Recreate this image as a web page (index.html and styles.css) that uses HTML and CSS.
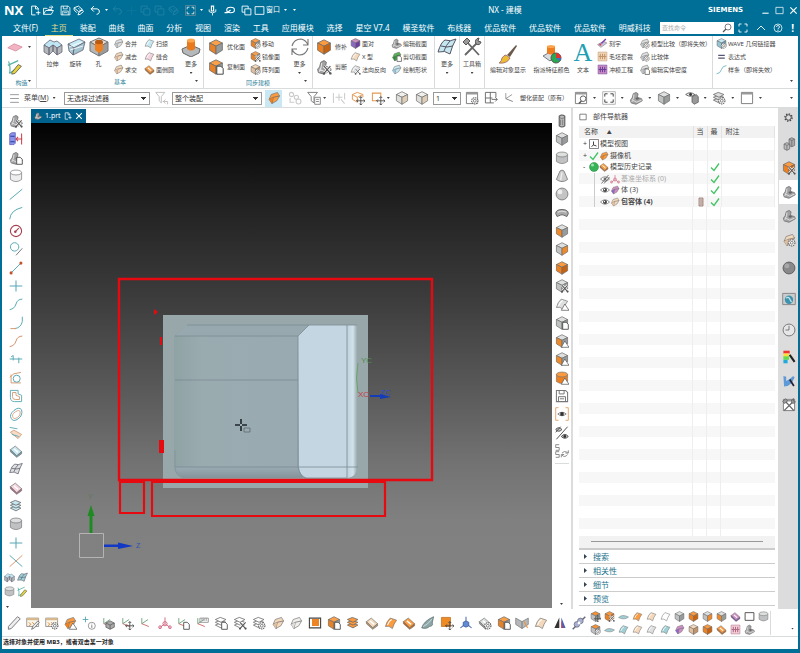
FILE: index.html
```html
<!DOCTYPE html>
<html lang="zh-CN">
<head>
<meta charset="utf-8">
<title>NX - 建模</title>
<link rel="stylesheet" href="styles.css">
</head>
<body>
<svg class="sprite" aria-hidden="true">
<!-- solids -->
<symbol id="cube" viewBox="0 0 20 20"><g stroke="#6d6d6d" stroke-width="1" stroke-linejoin="round"><path d="M10 1 18 5 10 9 2 5z" fill="var(--t)"/><path d="M2 5 10 9V19L2 14z" fill="var(--l)"/><path d="M18 5 10 9V19L18 14z" fill="var(--r)"/></g></symbol>
<symbol id="cyl" viewBox="0 0 20 20"><g stroke="#777" fill="var(--l)"><path d="M2 5V15Q10 21 18 15V5z"/><ellipse cx="10" cy="5" rx="8" ry="3.5" fill="var(--t)"/></g></symbol>
<symbol id="blend" viewBox="0 0 20 20"><path d="M3 12 6 5 15 2 18 7 14 14 7 18z" fill="var(--t)" stroke="#777"/><path d="M3 12 9 9 18 7M9 9 7 18" stroke="#666" fill="none"/><path d="M3 12 9 9 7 18z" fill="var(--l)"/></symbol>
<symbol id="capsule" viewBox="0 0 20 20"><path d="M6 3Q10 0 14 3V17Q10 20 6 17z" fill="#bbb" stroke="#555" stroke-width="1.5"/><path d="M6 5Q10 8 14 5M8 8V16M11 8V16" stroke="#666" fill="none"/></symbol>
<symbol id="measure" viewBox="0 0 20 20"><path d="M1 3 4 1H9V16L7 18H1z" fill="#8b94e8" stroke="#4a51b0"/><path d="M2 6H8M2 14H8" stroke="#3238a0" stroke-width="1.5"/><path d="M10 10H19M13 7 10 10 13 13M18 2V18" stroke="#d0404f" stroke-width="1.5" fill="none"/></symbol>
<symbol id="cone" viewBox="0 0 20 20"><path d="M7 3Q10 0 13 3L18 15Q10 21 2 15z" fill="#ccc" stroke="#777" stroke-width="1.2"/><path d="M10 5 8 16" stroke="#eee" stroke-width="2"/></symbol>
<symbol id="sphere" viewBox="0 0 20 20"><circle cx="10" cy="10" r="8.500" fill="#c4c4c4" stroke="#777" stroke-width="1.2"/><circle cx="7" cy="7" r="3.500" fill="#eee"/></symbol>
<symbol id="torus" viewBox="0 0 20 20"><path d="M1 11Q1 5 10 5T19 11L17 15 12 13Q10 12 8 13L3 15z" fill="#aaa" stroke="#555" stroke-width="1.2"/><path d="M4 9Q10 6 16 9" stroke="#ddd" fill="none" stroke-width="1.5"/></symbol>
<symbol id="extrude" viewBox="0 0 20 20"><g stroke="#667" stroke-width=".8" stroke-linejoin="round"><path d="M1 8 7 3 11 5 14 4 19 8 14 11 10 8 6 11z" fill="#bfe6f2"/><path d="M1 8 6 11V18L1 15zM6 11 10 8V14L6 18zM10 8 14 11V18L10 14zM14 11 19 8V15L14 18z" fill="#b4b8ba"/></g></symbol>
<symbol id="asm" viewBox="0 0 20 20"><g stroke="#666" stroke-linejoin="round"><path d="M10 3 14 1 18 3V12L14 14 10 12z" fill="#aaa"/><path d="M3 10 7 8 11 10V17L7 19 3 17z" fill="#bbb"/><path d="M10 3 14 5 18 3M14 5V14M3 10 7 12 11 10M7 12V19" fill="none"/></g></symbol>
<symbol id="revolve" viewBox="0 0 20 20"><g stroke="#667" stroke-width=".8"><path d="M2 7 13 2 19 5 8 11z" fill="#c7ebf6"/><path d="M2 7 8 11 7 18 3 14zM8 11 19 5 17 13 7 18z" fill="#a4c4d0"/><path d="M3 10 16 5M4 13 17 9" fill="none" stroke="#fff"/></g></symbol>
<symbol id="hole" viewBox="0 0 20 20"><g stroke="#777" stroke-linejoin="round"><path d="M10 1 19 5 10 10 1 5z" fill="#d9dada"/><path d="M1 5 10 10V19L1 14z" fill="#b4b6b7"/><path d="M19 5 10 10V19L19 14z" fill="#999c9d"/></g><path d="M6 5V13L10 16 14 13V5z" fill="#ee801f"/><ellipse cx="10" cy="5" rx="4" ry="2.200" fill="#b95a12"/></symbol>
<symbol id="part" viewBox="0 0 20 20"><path d="M2 13Q5 11 6 4L10 2 13 4 12 9 18 11 19 14 10 19 3 17z" fill="#a2a2a2" stroke="#666"/><path d="M7 5Q7 11 5 13L11 16 18 13M5 13 4 16" stroke="#e2e2e2" fill="none" stroke-width="1.3"/><path d="M9 10 12 9 15 11 11 13z" fill="#666"/></symbol>
<symbol id="boss" viewBox="0 0 20 20"><path d="M1 12 10 8 19 12 18 16 10 20 2 16z" fill="#b5b9bb" stroke="#666"/><path d="M6 3V12Q10 15 14 12V3z" fill="#e87a1c"/><ellipse cx="10" cy="3.500" rx="4" ry="2" fill="#fba64e"/></symbol>
<!-- sheets -->
<symbol id="sheet" viewBox="0 0 20 20"><path d="M2 15Q4 7 9 3L18 6Q14 11 12 18 7 13 2 15z" fill="var(--t)" stroke="#777"/><path d="M5 13Q7 7 11 5" stroke="#fff" stroke-width="1.5" fill="none"/></symbol>
<symbol id="mesh" viewBox="0 0 20 20"><path d="M1 15Q4 5 8 3 13 5 19 2 15 9 13 17 8 13 1 15z" fill="var(--t)" stroke="#556"/><path d="M4 9Q10 11 16 9M13 4Q9 8 7 14" stroke="#556" fill="none"/></symbol>
<symbol id="slab" viewBox="0 0 20 20"><path d="M2 8 9 3 18 11 11 17z" fill="var(--t)" stroke="#777"/><path d="M2 8V11L11 19 18 14V11L11 17z" fill="var(--r)" stroke="#777"/><path d="M7 7 13 12" stroke="#fff" stroke-width="2"/></symbol>
<symbol id="layers" viewBox="0 0 20 20"><g fill="var(--t)" stroke="#666" stroke-width="1.100"><path d="M2 13 9 10 17 13 10 17z"/><path d="M2 9 9 6 17 9 10 13z"/><path d="M2 5 9 2 17 5 10 9z"/></g></symbol>
<symbol id="wing" viewBox="0 0 20 20"><path d="M1 17Q4 7 18 1L16 10Q18 14 12 15 8 19 1 17z" fill="#8fa6a8" stroke="#566"/><path d="M3 15Q9 13 16 4" stroke="#dee" fill="none"/></symbol>
<symbol id="vee" viewBox="0 0 20 20"><path d="M1 3 10 8 19 3V12L10 18 1 12z" fill="#b5b7b8" stroke="#777"/><path d="M10 8V18" stroke="#666"/><path d="M13 8 18 17" stroke="#e7953d" stroke-width="1.5"/></symbol>
<symbol id="mirror" viewBox="0 0 20 20"><path d="M9 2V17H2z" fill="#333"/><path d="M12 2V17H18z" fill="#4a63b8"/><path d="M12 5V17H14z" fill="#d33"/></symbol>
<symbol id="dish" viewBox="0 0 20 20"><path d="M1 12Q8 5 19 11 12 17 1 12z" fill="var(--t)" stroke="#777"/></symbol>
<symbol id="rods" viewBox="0 0 20 20"><g stroke="#667" stroke-width="1" fill="#a8b0d2"><circle cx="7" cy="12" r="4"/><circle cx="12" cy="7" r="4"/><path d="M15 5 19 1M5 15 1 19" stroke-width="2"/></g><circle cx="10" cy="10" r="2" fill="#fff"/></symbol>
<!-- curves -->
<symbol id="line" viewBox="0 0 20 20"><path d="M1 18 19 3" stroke="#58a9b5" stroke-width="1.400"/></symbol>
<symbol id="arc" viewBox="0 0 20 20"><path d="M1 19Q2 6 19 2" stroke="#58a9b5" stroke-width="1.400" fill="none"/></symbol>
<symbol id="circle" viewBox="0 0 20 20"><circle cx="10" cy="10" r="8" stroke="#a5404c" stroke-width="1.600" fill="none"/><path d="M9 11 14 6" stroke="#a5404c" stroke-width="1.500"/><circle cx="9" cy="11" r="1.800" fill="#a5404c"/></symbol>
<symbol id="tangent" viewBox="0 0 20 20"><circle cx="8" cy="7" r="6" stroke="#58a9b5" stroke-width="1.400" fill="none"/><path d="M10 19 19 9" stroke="#777" stroke-width="1.400"/></symbol>
<symbol id="seg" viewBox="0 0 20 20"><path d="M3 17 17 3" stroke="#58a9b5" stroke-width="1.400"/><circle cx="3" cy="17" r="2.200" fill="#c5532a"/><circle cx="17" cy="3" r="2.200" fill="#c5532a"/></symbol>
<symbol id="plus" viewBox="0 0 20 20"><path d="M10 2V18M1 10H19" stroke="#58a9b5" stroke-width="1.500"/></symbol>
<symbol id="spline" viewBox="0 0 20 20"><path d="M1 18Q8 17 10 10T19 3" stroke="var(--c,#58a9b5)" stroke-width="1.400" fill="none"/></symbol>
<symbol id="fillet" viewBox="0 0 20 20"><path d="M19 1V8Q17 17 8 18" stroke="#58a9b5" stroke-width="1.400" fill="none"/><path d="M2 18H10" stroke="#d79a72" stroke-width="1.400"/></symbol>
<symbol id="trim" viewBox="0 0 20 20"><path d="M1 10H19M6 5V12M14 8V16M3 7 6 5" stroke="#58a9b5" stroke-width="1.400" fill="none"/></symbol>
<symbol id="project" viewBox="0 0 20 20"><path d="M3 5V17H17M1 9 7 4 17 2" stroke="#d79a72" stroke-width="1.400" fill="none"/><circle cx="11" cy="11" r="5" stroke="#58a9b5" stroke-width="1.400" fill="none"/></symbol>
<symbol id="offset" viewBox="0 0 20 20"><path d="M2 2H13V7L18 9V18H8Q2 18 2 12z" stroke="#58a9b5" stroke-width="1.300" fill="none"/><path d="M5 5H10V9L15 11V15H9Q5 15 5 11z" stroke="#d79a72" stroke-width="1.300" fill="none"/></symbol>
<symbol id="ring" viewBox="0 0 20 20"><path d="M3 16Q0 11 7 5T18 4Q20 12 13 17T3 16z" stroke="#58a9b5" stroke-width="1.400" fill="none"/><path d="M6 15Q3 11 9 7T16 7Q17 12 12 15T6 15z" stroke="#d79a72" fill="none" stroke-width="1.200"/></symbol>
<symbol id="cross" viewBox="0 0 20 20"><path d="M1 2 19 18" stroke="#58a9b5" stroke-width="1.400"/><path d="M19 2 1 18" stroke="#d79a72" stroke-width="1.400"/></symbol>
<symbol id="swept" viewBox="0 0 20 20"><path d="M2 9 7 6 18 12 13 18z" fill="#f6dcc8" stroke="#c98a62"/><path d="M4 12 14 15M1 2 12 4" stroke="#58a9b5" stroke-width="1.300"/></symbol>
<!-- csys -->
<symbol id="axes" viewBox="0 0 20 20"><path d="M4 3V11L13 5" stroke="#6aa37a" stroke-width="1.300" fill="none"/><path d="M4 11 14 15" stroke="#c66" stroke-width="1.300"/></symbol>
<symbol id="csys" viewBox="0 0 20 20"><g fill="none" stroke="#d0637f" stroke-width="1.300"><path d="M10 2V11L2 17M10 11 18 17"/><circle cx="10" cy="11" r="3"/><circle cx="3" cy="16" r="2"/><circle cx="17" cy="16" r="2"/></g></symbol>
<symbol id="pin" viewBox="0 0 20 20"><path d="M10 1V11L2 17M10 11 18 17" stroke="#4a6fb5" stroke-width="1.500" fill="none"/><path d="M6 9 10 7 14 9V14L10 16 6 14z" fill="#5f8ad6" stroke="#35508c"/></symbol>
<symbol id="note" viewBox="0 0 20 20"><path d="M7 3H19V9H7zM10 3V7M13 3V7M16 3V7" fill="none" stroke="#888" stroke-width="1.200"/></symbol>
<!-- small marks placed in the lower right corner -->
<symbol id="m-tri" viewBox="0 0 20 20"><path d="M14 10 20 19H9z" fill="#fff" stroke="#555"/></symbol>
<symbol id="m-doc" viewBox="0 0 20 20"><path d="M11 9H16L19 12V19H11z" fill="#fff" stroke="#444" stroke-width="1.200"/></symbol>
<symbol id="m-x" viewBox="0 0 20 20"><path d="M10 9 18 18M18 9 10 18" stroke="#fff" stroke-width="3.500"/><path d="M10 9 18 18M18 9 10 18" stroke="#555" stroke-width="1.500"/><circle cx="10" cy="18" r="1.500" fill="#555"/><circle cx="18" cy="18" r="1.500" fill="#555"/></symbol>
<symbol id="m-gear" viewBox="0 0 20 20"><circle cx="14" cy="14" r="4.500" fill="#fff" stroke="#555" stroke-width="1.500" stroke-dasharray="2 1"/><circle cx="14" cy="14" r="2" fill="#fff" stroke="#555"/></symbol>
<symbol id="m-info" viewBox="0 0 20 20"><circle cx="14" cy="14" r="5" fill="#fff" stroke="#888" stroke-width="1.200"/><path d="M14 11V12M14 13V17" stroke="#777" stroke-width="1.300"/></symbol>
<symbol id="m-plus" viewBox="0 0 20 20"><path d="M5 1V9M1 5H9" stroke="#58a9b5" stroke-width="1.300"/></symbol>
<symbol id="m-move" viewBox="0 0 20 20"><path d="M14 8V20M8 14H20M12 10 14 8 16 10M12 18 14 20 16 18M10 12 8 14 10 16M18 12 20 14 18 16" stroke="#444" stroke-width="1.200" fill="none"/></symbol>
<symbol id="m-pen" viewBox="0 0 20 20"><path d="M8 19 10 14 17 7 19 9 12 17z" fill="#eee" stroke="#555"/></symbol>
<symbol id="m-mag" viewBox="0 0 20 20"><path d="M7 18 11 14" stroke="#555" stroke-width="2"/><circle cx="13" cy="11" r="4" fill="#fff" stroke="#555" stroke-width="1.300"/></symbol>
<symbol id="m-cube" viewBox="0 0 20 20"><path d="M13 7 19 10V16L13 19 7 16V10z" fill="#aaa" stroke="#555"/><path d="M7 10 13 13 19 10M13 13V19" fill="none" stroke="#555"/></symbol>
<!-- interface -->
<symbol id="pen" viewBox="0 0 20 20"><path d="M2 15 15 1 19 4 6 18 2 19z" fill="#eee" stroke="#666" stroke-width="1.200"/></symbol>
<symbol id="sticky" viewBox="0 0 20 20"><path d="M1 3H18V15H1z" fill="#fbf6ec" stroke="#777"/><path d="M1 3H18V6H1z" fill="#d8b88a"/><path d="M4 9 7 12 4 14M9 9 12 12" stroke="#e08a34" fill="none" stroke-width="1.400"/></symbol>
<symbol id="plane" viewBox="0 0 20 20"><path d="M1 11 9 6 19 10 11 15z" fill="#f2b4c2" stroke="#d78a9c"/></symbol>
<symbol id="sketch" viewBox="0 0 20 20"><path d="M2 3Q5 12 3 18M1 8 14 2M3 18 10 13" stroke="#58b2a8" stroke-width="1.500" fill="none"/><path d="M6 17 14 7 18 9 10 18 6 19z" fill="#e6d33b" stroke="#555"/></symbol>
<symbol id="cycle" viewBox="0 0 20 20"><path d="M2 9Q4 2 11 2 16 3 18 8M18 11Q16 18 9 18 4 17 2 12M18 2V8H13M2 18V12H7" stroke="#777" stroke-width="1.100" fill="none"/></symbol>
<symbol id="tools" viewBox="0 0 20 20"><path d="M3 18 15 6M5 5 17 18" stroke="#666" stroke-width="1.800"/><path d="M1 5 5 1 8 4 4 8zM14 7Q12 2 17 1L16 4 19 5Q18 9 14 7z" fill="#999" stroke="#555"/></symbol>
<symbol id="brush" viewBox="0 0 20 20"><path d="M9 11 18 1 19 2 12 13z" fill="#6b5a4c"/><path d="M8 11 12 14Q9 20 1 19 4 17 4 14 6 11 8 11z" fill="#ecbd32" stroke="#a77"/></symbol>
<symbol id="palette" viewBox="0 0 20 20"><path d="M1 12 8 8 14 11 8 17z" fill="#d8dde0" stroke="#778"/><path d="M5 2V9Q9 12 13 9V2z" fill="#ef7d1d"/><ellipse cx="9" cy="2.500" rx="4" ry="1.500" fill="#fba64e"/><circle cx="14" cy="14" r="5" fill="#2aa851" stroke="#555"/><path d="M14 14V9A5 5 0 0 1 19 14z" fill="#d33"/><path d="M14 14 18 17A5 5 0 0 0 19 14z" fill="#3a6dcf"/></symbol>
<symbol id="badge" viewBox="0 0 20 20"><path d="M2 2H18V18H2z" fill="var(--t)" stroke="var(--r)"/><path d="M6 5V15M10 5V15M14 5V15M3 10H17" stroke="var(--r)" stroke-width="2"/></symbol>
<symbol id="tile" viewBox="0 0 20 20"><path d="M2 2H15V15H2z" fill="#ee8b24" stroke="#b96a1c"/></symbol>
<symbol id="engrave" viewBox="0 0 20 20"><path d="M1 12 12 6 18 9 7 17z" fill="#c9c3dd" stroke="#777"/><path d="M8 10 16 2" stroke="#7a3fb0" stroke-width="2.500"/><circle cx="6" cy="12" r="2" fill="#d0404f"/></symbol>
<symbol id="eq" viewBox="0 0 20 20"><path d="M4 8H16M4 13H16" stroke="#557" stroke-width="2"/></symbol>
<symbol id="frame" viewBox="0 0 20 20"><path d="M2 2H18V18H2z" fill="#fff" stroke="#777" stroke-width="1.300"/><path d="M2 2H18V5H2z" fill="#999"/></symbol>
<symbol id="box" viewBox="0 0 20 20"><path d="M2 3H18V17H2z" fill="none" stroke="currentColor" stroke-width="1.600"/></symbol>
<symbol id="fit" viewBox="0 0 20 20"><path d="M1 1H19V19H1z" fill="none" stroke="#999"/><path d="M4 8V4H8M12 4H16V8M16 12V16H12M8 16H4V12" fill="none" stroke="currentColor" stroke-width="1.400"/></symbol>
<symbol id="mview" viewBox="0 0 20 20"><path d="M1 1H19V19H1z" fill="#fff" stroke="#555" stroke-width="1.400"/><path d="M9 5V12L5 15M9 12 15 14" fill="none" stroke="#444" stroke-width="2"/></symbol>
<symbol id="full" viewBox="0 0 20 20"><path d="M2 7V2H7M13 2H18V7M18 13V18H13M7 18H2V13" fill="none" stroke="currentColor" stroke-width="1.800"/></symbol>
<symbol id="eye" viewBox="0 0 20 20"><path d="M1 10Q10 1 19 10 10 19 1 10z" fill="#fff" stroke="#666" stroke-width="1.400"/><circle cx="10" cy="10" r="4" fill="#444"/><circle cx="9" cy="9" r="1.300" fill="#fff"/></symbol>
<symbol id="hidden" viewBox="0 0 20 20"><path d="M1 10Q10 1 19 10 10 19 1 10z" fill="#fff" stroke="#666" stroke-width="1.400"/><circle cx="10" cy="10" r="3" fill="#777"/><path d="M3 19 17 2M8 19 19 6" stroke="#555" stroke-width="1.500"/></symbol>
<symbol id="eyebr" viewBox="0 0 20 20"><path d="M5 1H1V19H5M15 1H19V19H15" fill="none" stroke="#eaa76a" stroke-width="1.400"/><path d="M4 10Q10 5 16 10 10 15 4 10z" fill="#fff" stroke="#555"/><circle cx="10" cy="10" r="2.700" fill="#333"/></symbol>
<symbol id="eyes" viewBox="0 0 20 20"><path d="M1 5Q5 0 10 5 5 10 1 5zM9 15Q14 9 19 15 14 20 9 15z" fill="#ccc" stroke="#444" stroke-width="1.300"/><circle cx="14" cy="15" r="2" fill="#333"/><path d="M2 19 18 1M1 9 8 1" stroke="#444" stroke-width="1.300"/></symbol>
<symbol id="swap" viewBox="0 0 20 20"><path d="M6 1H1V5H6V9H1M6 11H1V15H6V19H1M10 13Q13 9 18 12M19 9V13H15M18 15Q14 20 10 16M9 19V15H13" stroke="#777" fill="none" stroke-width="1.200"/></symbol>
<symbol id="showcube" viewBox="0 0 20 20"><path d="M1 5Q7 0 14 5 8 10 1 5z" fill="#eee" stroke="#555" stroke-width="1.200"/><circle cx="8" cy="5" r="2" fill="#333"/><path d="M10 8 16 5 19 8V16L13 19 10 16z" fill="#999" stroke="#555"/></symbol>
<symbol id="save" viewBox="0 0 20 20"><path d="M2 2H15L18 5V18H2z" fill="none" stroke="currentColor" stroke-width="1.500"/><path d="M6 2V7H13V2M5 18V11H15V18M7 14H13" fill="none" stroke="currentColor" stroke-width="1.400"/></symbol>
<symbol id="new" viewBox="0 0 20 20"><path d="M10 18H3V2H11L15 6V9M10 2V7H15M11 14H19M15 10V18" fill="none" stroke="currentColor" stroke-width="1.700"/></symbol>
<symbol id="open" viewBox="0 0 20 20"><path d="M1 17V6H7L9 8H16V10M1 17 5 10H19L15 17zM11 4H17M15 1 18 4 15 7" fill="none" stroke="currentColor" stroke-width="1.600"/></symbol>
<symbol id="edit" viewBox="0 0 20 20"><path d="M2 5 10 2 17 8 10 12zM2 5V9L7 14M10 6 12 8M9 18 11 13 17 9 19 12 13 17z" fill="none" stroke="currentColor" stroke-width="1.700"/></symbol>
<symbol id="undo" viewBox="0 0 20 20"><path d="M7 2 2 7 7 12M2 7H13Q18 8 17 13 16 17 12 17" fill="none" stroke="currentColor" stroke-width="1.800"/></symbol>
<symbol id="copy" viewBox="0 0 20 20"><path d="M2 2H13V7H18V18H7V13H2zM7 13V7H13" fill="none" stroke="currentColor" stroke-width="1.600"/></symbol>
<symbol id="mic" viewBox="0 0 20 20"><path d="M8 2H12V11H8z" fill="none" stroke="currentColor" stroke-width="2"/><path d="M4 8V12Q10 17 16 12V8M10 15V19" fill="none" stroke="currentColor" stroke-width="1.600"/></symbol>
<symbol id="key" viewBox="0 0 20 20"><ellipse cx="12" cy="9" rx="7" ry="5" fill="none" stroke="currentColor" stroke-width="2"/><path d="M1 14H6L12 9" stroke="currentColor" stroke-width="2.200" fill="none"/></symbol>
<symbol id="search" viewBox="0 0 20 20"><circle cx="12" cy="8" r="6" fill="none" stroke="#555" stroke-width="1.500"/><path d="M8 12 2 18" stroke="#555" stroke-width="2.400"/></symbol>
<symbol id="help" viewBox="0 0 20 20"><circle cx="10" cy="10" r="8" fill="none" stroke="currentColor" stroke-width="1.500"/><path d="M7 8Q7 5 10 5T13 8Q13 10 10 11V13M10 14V16" fill="none" stroke="currentColor" stroke-width="1.600"/></symbol>
<symbol id="up" viewBox="0 0 20 20"><path d="M2 14 10 6 18 14" fill="none" stroke="currentColor" stroke-width="1.800"/></symbol>
<symbol id="close" viewBox="0 0 20 20"><path d="M3 3 17 17M17 3 3 17" stroke="currentColor" stroke-width="2.600"/></symbol>
<symbol id="min" viewBox="0 0 20 20"><path d="M3 16H17" stroke="currentColor" stroke-width="2.400"/></symbol>
<symbol id="funnel" viewBox="0 0 20 20"><path d="M1 2H15L10 8V17L6 14V8z" fill="none" stroke="#777" stroke-width="1.300"/><path d="M11 9H19V19H11zM13 12H17M13 15H17" fill="#fff" stroke="#777" stroke-width="1.200"/></symbol>
<symbol id="funnel2" viewBox="0 0 20 20"><path d="M1 2H14L9 8V17L6 14V8zM11 15H18V19M15 12 12 15 15 18" fill="none" stroke="#bbb" stroke-width="1.300"/></symbol>
<symbol id="balls" viewBox="0 0 20 20"><g fill="none" stroke="#ccc" stroke-width="1.600"><circle cx="5" cy="5" r="3"/><circle cx="12" cy="9" r="3"/><circle cx="15" cy="15" r="3.500"/><path d="M3 10V16H9"/></g></symbol>
<symbol id="snap" viewBox="0 0 20 20"><path d="M2 3V17M18 3V12M5 9H15M10 4V14M13 12 18 18" stroke="#ccc" stroke-width="1.500" fill="none"/></symbol>
<symbol id="wirebox" viewBox="0 0 20 20"><path d="M9 2 17 5 9 9 2 5zM2 5V12L9 16V9M17 5V9" fill="none" stroke="#e39a52" stroke-width="1.400"/></symbol>
<symbol id="wiresq" viewBox="0 0 20 20"><path d="M9 14H2V3H14V8" fill="none" stroke="#e39a52" stroke-width="1.500"/></symbol>
<symbol id="list" viewBox="0 0 20 20"><path d="M2 3H18M2 10H18M2 17H18" stroke="#888" stroke-width="1.500"/></symbol>
<symbol id="gridv" viewBox="0 0 20 20"><path d="M14 17H2V2H17V9M9 2V17M2 10H12M11 12H19M16 9 19 12 16 15" fill="none" stroke="#666" stroke-width="1.300"/></symbol>
<symbol id="gear" viewBox="0 0 20 20"><circle cx="10" cy="10" r="8" fill="none" stroke="#444" stroke-width="3" stroke-dasharray="3.200 3"/><circle cx="10" cy="10" r="6" fill="none" stroke="#444" stroke-width="2"/></symbol>
<symbol id="check" viewBox="0 0 20 20"><path d="M2 11 8 17 18 3" fill="none" stroke="#43c465" stroke-width="2.600"/></symbol>
<symbol id="green" viewBox="0 0 20 20"><circle cx="10" cy="10" r="9" fill="#37b257" stroke="#2b8743"/><circle cx="7" cy="6" r="3" fill="#9be3ac"/></symbol>
<symbol id="browser" viewBox="0 0 20 20"><path d="M1 2H19V18H1z" fill="#ccc" stroke="#888" stroke-width="1.400"/><circle cx="10" cy="11" r="6" fill="#3d92ad"/><path d="M6 9Q9 6 11 10T14 14" stroke="#bfe5ec" stroke-width="2" fill="none"/></symbol>
<symbol id="clock" viewBox="0 0 20 20"><circle cx="10" cy="10" r="8.500" fill="#e6e6e6" stroke="#777" stroke-width="1.400"/><path d="M10 4V10H5" stroke="#666" fill="none" stroke-width="1.200"/></symbol>
<symbol id="rainbow" viewBox="0 0 20 20"><path d="M2 1H11V5H2z" fill="#e33"/><path d="M2 5H10V9H2z" fill="#fd3"/><path d="M2 9H10V14H2z" fill="#6d4"/><path d="M2 14H8V19H2z" fill="#2ad"/><path d="M11 7 18 17" stroke="#222" stroke-width="3"/></symbol>
<symbol id="bluek" viewBox="0 0 20 20"><path d="M2 3 6 4V10L11 7 16 3 18 5 14 13 8 17 3 18z" fill="#5f9ad8"/><path d="M11 8 17 17" stroke="#223" stroke-width="2.500"/></symbol>
<symbol id="phone" viewBox="0 0 20 20"><path d="M6 2H14V18H6z" fill="#dcc" stroke="#865" stroke-width="1.400"/><path d="M8 6H13M8 10H13M8 14H13" stroke="#754"/></symbol>
</svg>

<header class="title">
  <strong class="logo">NX</strong>
  <nav class="quick" aria-label="快速访问">
    <button aria-label="新建"><svg><use href="#new"/></svg></button>
    <button aria-label="打开"><svg><use href="#open"/></svg></button>
    <button aria-label="保存" class="gapl"><svg><use href="#save"/></svg></button>
    <button aria-label="编辑"><svg><use href="#edit"/></svg></button>
    <button aria-label="撤销" class="gapl"><svg><use href="#undo"/></svg></button><i class="car"></i>
    <span class="faint"><svg><use href="#undo"/></svg><svg><use href="#plus"/></svg><svg><use href="#copy"/></svg><svg><use href="#copy"/></svg><svg><use href="#edit"/></svg></span>
    <button aria-label="视图"><svg><use href="#fit"/></svg></button><i class="car"></i>
    <button aria-label="语音"><svg><use href="#mic"/></svg></button>
    <button aria-label="触控" class="gapl"><svg><use href="#key"/></svg></button>
    <button aria-label="切换窗口" class="gapl"><svg><use href="#copy"/></svg></button>
    <button class="win"><svg><use href="#box"/></svg>窗口</button><i class="car"></i><i class="car"></i>
  </nav>
  <h1>NX - 建模</h1>
  <div class="sys"><b>SIEMENS</b>
    <button aria-label="最小化"><svg><use href="#min"/></svg></button>
    <button aria-label="最大化"><svg><use href="#box"/></svg></button>
    <button aria-label="关闭"><svg><use href="#close"/></svg></button>
  </div>
</header>

<div class="menubar">
  <nav class="tabs" aria-label="功能区">
    <a href="#">文件(F)</a><a href="#" class="on">主页</a><a href="#">装配</a><a href="#">曲线</a><a href="#">曲面</a><a href="#">分析</a><a href="#">视图</a><a href="#">渲染</a><a href="#">工具</a><a href="#">应用模块</a><a href="#">选择</a><a href="#">星空 V7.4</a><a href="#">模圣软件</a><a href="#">布线器</a><a href="#">优品软件</a><a href="#">优品软件</a><a href="#">优品软件</a><a href="#">明威科技</a>
  </nav>
  <label class="find"><input type="text" placeholder="查找命令" aria-label="查找命令"><svg><use href="#search"/></svg></label>
  <div class="mini">
    <button aria-label="全屏"><svg><use href="#full"/></svg></button>
    <button aria-label="折叠"><svg><use href="#up"/></svg></button>
    <button aria-label="帮助"><svg><use href="#help"/></svg></button>
    <button>!</button>
  </div>
</div>

<section class="ribbon">
  <div class="group g1">
    <div class="cols"><div class="mids"><button aria-label="基准平面"><svg><use href="#plane"/></svg><i class="car"></i></button><button aria-label="草图"><svg><use href="#sketch"/></svg></button></div></div>
    <footer>构造<i class="car"></i></footer>
  </div>
  <div class="group g2">
    <div class="cols">
      <button class="big"><svg><use href="#extrude"/></svg>拉伸</button>
      <button class="big"><svg><use href="#revolve"/></svg>旋转</button>
      <button class="big"><svg><use href="#hole"/></svg>孔</button>
      <div class="smalls"><button><svg><use href="#blend"/></svg>合并</button><button><svg class="tan"><use href="#blend"/></svg>减去</button><button><svg class="tan"><use href="#blend"/></svg>求交</button></div>
      <div class="smalls"><button><svg class="blue"><use href="#sheet"/></svg>扫掠</button><button><svg class="pink"><use href="#sheet"/></svg>缝合</button><button><svg class="o"><use href="#slab"/></svg>面倒圆</button></div>
      <button class="big"><svg><use href="#boss"/></svg>更多<i class="car"></i></button>
    </div>
    <footer>基本<i class="car"></i></footer>
  </div>
  <div class="group g3">
    <div class="cols">
      <div class="mids"><button><svg class="otl"><use href="#cube"/></svg>优化面</button><button><svg class="otl"><use href="#cube"/><use href="#m-doc"/></svg>复制面</button></div>
      <div class="smalls"><button><svg class="otl"><use href="#cube"/><use href="#m-gear"/></svg>移动</button><button><svg class="otl"><use href="#cube"/><use href="#m-x"/></svg>镜像面</button><button><svg class="tan"><use href="#cube"/><use href="#m-gear"/></svg>阵列面</button></div>
      <button class="big"><svg><use href="#cycle"/></svg>更多<i class="car"></i></button>
    </div>
    <footer>同步建模<i class="car"></i></footer>
  </div>
  <div class="group g4">
    <div class="cols">
      <div class="mids"><button><svg class="o"><use href="#cube"/></svg>修补</button><button><svg><use href="#part"/><use href="#m-x"/></svg>剪断</button></div>
      <div class="smalls"><button><svg class="vio"><use href="#cube"/></svg>面对</button><button><svg class="tan"><use href="#sheet"/></svg>X 型</button><button><svg><use href="#sheet"/><use href="#m-x"/></svg>法向反向</button></div>
      <div class="smalls"><button><svg><use href="#part"/></svg>编辑截面</button><button><svg class="grn"><use href="#blend"/><use href="#m-doc"/></svg>剪切截面</button><button><svg class="blue"><use href="#blend"/></svg>绘制形状</button></div>
    </div>
  </div>
  <div class="group g5"><div class="cols"><button class="big"><svg class="blue"><use href="#mesh"/></svg>更多<i class="car"></i></button></div></div>
  <div class="group g6"><div class="cols"><button class="big"><svg><use href="#tools"/></svg>工具箱<i class="car"></i></button></div></div>
  <div class="group g7">
    <div class="cols">
      <button class="big wide"><svg><use href="#brush"/></svg>编辑对象显示</button>
      <button class="big wide"><svg><use href="#palette"/></svg>指派特征颜色</button>
      <button class="big wide"><span class="glyph">A</span>文本</button>
      <div class="smalls"><button><svg><use href="#engrave"/></svg>刻字</button><button><svg class="tan"><use href="#badge"/></svg>毛坯套裁</button><button><svg class="vio"><use href="#badge"/></svg>冲模工程</button></div>
      <div class="smalls"><button><svg><use href="#blend"/><use href="#m-gear"/></svg>模型比较（即将失效）</button><button><svg><use href="#blend"/><use href="#m-gear"/></svg>比较体</button><button><svg><use href="#blend"/><use href="#m-doc"/></svg>编辑实体密度</button></div>
    </div>
  </div>
  <div class="group g8">
    <div class="cols"><div class="smalls"><button><svg class="blue"><use href="#cube"/><use href="#m-gear"/></svg>WAVE 几何链接器</button><button><svg><use href="#eq"/></svg>表达式</button><button><svg><use href="#spline"/></svg>样条（即将失效）</button></div></div>
    <footer><i class="car"></i></footer>
  </div>
</section>

<section class="selbar">
  <button class="menu"><svg><use href="#list"/></svg><span>菜单(<u>M</u>)</span><i class="car"></i></button>
  <select class="s1" aria-label="类型过滤器"><option>无选择过滤器</option></select>
  <svg><use href="#funnel2"/></svg>
  <select class="s2" aria-label="选择范围"><option>整个装配</option></select>
  <div class="tools">
    <button class="hot" aria-label="选择体"><svg class="o"><use href="#blend"/></svg></button>
    <button aria-label="选择组"><svg><use href="#balls"/></svg></button>
    <button aria-label="过滤"><svg><use href="#funnel"/></svg><i class="car"></i></button>
    <button aria-label="捕捉"><svg><use href="#snap"/></svg></button>
    <button aria-label="移动体"><svg><use href="#wirebox"/><use href="#m-move"/></svg></button>
    <button aria-label="矩形选择"><svg><use href="#wiresq"/><use href="#m-move"/></svg><i class="car"></i></button>
    <button aria-label="着色"><svg class="pale"><use href="#cube"/></svg></button>
    <button aria-label="半透明"><svg class="pale"><use href="#cube"/></svg></button>
  </div>
  <select class="s3" aria-label="图层"><option>1</option></select>
  <div class="tools narrow">
    <button aria-label="图层设置"><svg><use href="#frame"/><use href="#m-gear"/></svg></button>
    <button aria-label="视图布局"><svg><use href="#gridv"/></svg></button>
    <button aria-label="坐标系"><svg class="mono"><use href="#axes"/></svg></button>
  </div>
  <button class="txt">塑化装配（原有）</button>
  <div class="tools views">
    <button aria-label="窗口缩放"><svg><use href="#frame"/><use href="#m-mag"/></svg><i class="car"></i></button>
    <button aria-label="适合窗口"><svg><use href="#fit"/></svg><i class="car"></i></button>
    <button aria-label="部件"><svg><use href="#part"/></svg><i class="car"></i></button>
    <button aria-label="渲染样式"><svg><use href="#cube"/></svg><i class="car"></i></button>
    <button aria-label="显示"><svg><use href="#showcube"/></svg><i class="car"></i></button>
    <button aria-label="图层"><svg><use href="#layers"/><use href="#m-gear"/></svg><i class="car"></i></button>
    <button aria-label="背景"><svg><use href="#frame"/></svg><i class="car"></i></button>
  </div>
  <i class="car end"></i>
</section>

<main>
  <aside class="left">
    <div class="stack">
      <button aria-label="部件"><svg><use href="#part"/><use href="#m-x"/></svg></button>
      <button aria-label="测量"><svg><use href="#measure"/></svg></button>
      <button aria-label="复制体"><svg><use href="#part"/><use href="#m-doc"/></svg></button>
      <button aria-label="圆柱"><svg class="lite"><use href="#cyl"/></svg></button>
      <button aria-label="直线"><svg><use href="#line"/></svg></button>
      <button aria-label="圆弧"><svg><use href="#arc"/></svg></button>
      <button aria-label="圆"><svg><use href="#circle"/></svg></button>
      <button aria-label="相切"><svg><use href="#tangent"/></svg></button>
      <button aria-label="线段"><svg><use href="#seg"/></svg></button>
      <button aria-label="点"><svg><use href="#plus"/></svg></button>
      <button aria-label="样条"><svg><use href="#spline"/></svg></button>
      <button aria-label="圆角"><svg><use href="#fillet"/></svg></button>
      <button aria-label="桥接"><svg class="brown"><use href="#spline"/></svg></button>
      <button aria-label="修剪"><svg><use href="#trim"/></svg></button>
      <button aria-label="投影"><svg><use href="#project"/></svg></button>
      <button aria-label="偏置"><svg><use href="#offset"/></svg></button>
      <button aria-label="环"><svg><use href="#ring"/></svg></button>
      <button aria-label="直纹"><svg><use href="#swept"/></svg></button>
      <button aria-label="曲面"><svg class="blue"><use href="#slab"/></svg></button>
      <button aria-label="网格面"><svg><use href="#mesh"/></svg></button>
      <button aria-label="偏置面"><svg class="pink"><use href="#slab"/></svg></button>
      <button aria-label="加厚"><svg class="blue"><use href="#layers"/></svg></button>
      <button aria-label="修剪体"><svg><use href="#cyl"/></svg></button>
      <button aria-label="基准点"><svg><use href="#plus"/></svg></button>
      <button aria-label="交点"><svg><use href="#cross"/></svg></button>
    </div>
    <div class="pairs">
      <button aria-label="块"><svg class="teal"><use href="#extrude"/></svg></button><button aria-label="片体"><svg class="teal"><use href="#mesh"/></svg></button>
      <button aria-label="圆柱体"><svg><use href="#cyl"/></svg></button><button aria-label="刷"><svg><use href="#sketch"/></svg></button>
    </div>
    <i class="car"></i>
  </aside>

  <section class="view">
    <div class="doctabs"><a href="#"><svg><use href="#part"/></svg>1.prt<svg><use href="#new"/></svg><svg><use href="#close"/></svg></a></div>
    <div class="canvas">
      <svg viewBox="31 123 521 485" role="img" aria-label="模型">
        <defs>
          <linearGradient id="face" x1="0" x2="1"><stop offset="0" stop-color="#8fa2a4"/><stop offset=".15" stop-color="#9aabb0"/><stop offset="1" stop-color="#98a9b2"/></linearGradient>
          <linearGradient id="edge" x1="0" x2="1"><stop offset="0" stop-color="#bdd3e0"/><stop offset=".6" stop-color="#d2e2ea"/><stop offset="1" stop-color="#9aaab0"/></linearGradient>
          <linearGradient id="foot" x1="0" x2="0" y1="0" y2="1"><stop offset="0" stop-color="#9babb4"/><stop offset="1" stop-color="#85949b"/></linearGradient>
        </defs>
        <path d="M163 315H368V488H163z" fill="#98a7a9"/>
        <path d="M187 325H357V467Q357 478 345 478H184Q174 476 174 467V336z" fill="url(#face)"/>
        <path d="M187 325H309L298 336H175z" fill="#97a9ae"/>
        <path d="M175 467H299L303 478H184Q176 476 175 467z" fill="url(#foot)"/>
        <path d="M309 325H347V478H307Q299 475 299 467L298 336z" fill="#c3d6e1"/>
        <path d="M347 325H357V467Q357 477 347 478z" fill="url(#edge)"/>
        <path d="M175 336H298L309 325M187 325H357M175 380H298M175 467H358M347 325V478M298 336V467Q300 476 305 478H347" fill="none" stroke="#7b8b92" stroke-width=".8"/>
        <path d="M175 450V467Q176 477 184 478" fill="none" stroke="#82939a" stroke-width=".7"/>
        <path d="M119 279H432V480H119z" fill="none" stroke="#e60a10" stroke-width="2.400"/>
        <path d="M120 482H144V513H120zM152 482H385V516H152z" fill="none" stroke="#e60a10" stroke-width="2.200"/>
        <path d="M154 309 158 312 154 315zM160 337H162V345H160zM159 440H164V453H159z" fill="#e60a10"/>
        <path d="M358 363Q355 378 358 393" stroke="#6aa36a" fill="none"/>
        <text x="361" y="363" font-size="8" fill="#4d9150">YC</text>
        <text x="358" y="397" font-size="8" fill="#c33d4a">XC</text>
        <text x="380" y="395" font-size="8" fill="#2c50c8">ZC</text>
        <path d="M370 395H380V394L391 397 380 399V397H370z" fill="#143bb8"/>
        <path d="M241 419V431M235 425H247" stroke="#1c262b" stroke-width="1.600"/><circle cx="241" cy="425" r="1" fill="#cdd"/>
        <path d="M244 428H250V432H244z" fill="none" stroke="#5a6a70" stroke-width=".8"/>
        <path d="M79.500 533.500H103.500V557.500H79.500z" fill="none" stroke="#b4b4b4"/>
        <path d="M89.500 533V516H87.500L91 505 94.500 516H92.500V533z" fill="#1e8b22"/>
        <path d="M104 544.500H118V542.500L133 546 118 549V547H104z" fill="#1338c4"/>
        <text x="88" y="499" font-size="7" fill="#5d7a5d">Y</text><text x="136" y="548" font-size="7" fill="#2f50b5">Z</text>
      </svg>
    </div>
  </section>

  <aside class="right">
    <div class="stack">
      <button aria-label="胶囊"><svg><use href="#capsule"/></svg></button>
      <button aria-label="块"><svg><use href="#cube"/></svg></button>
      <button aria-label="圆柱"><svg><use href="#cyl"/></svg></button>
      <button aria-label="圆锥"><svg><use href="#cone"/></svg></button>
      <button aria-label="球"><svg><use href="#sphere"/></svg></button>
      <button aria-label="管"><svg><use href="#torus"/></svg></button>
      <button aria-label="替换面"><svg class="ol"><use href="#cube"/></svg></button>
      <button aria-label="拉出面"><svg class="or"><use href="#cube"/></svg></button>
      <button aria-label="抽壳"><svg class="o"><use href="#cube"/></svg></button>
      <button aria-label="删除体"><svg><use href="#cube"/><use href="#m-x"/></svg></button>
      <button aria-label="面编辑"><svg><use href="#sheet"/><use href="#m-tri"/></svg></button>
      <button aria-label="复制体"><svg><use href="#cube"/><use href="#m-doc"/></svg></button>
      <button aria-label="拔模"><svg class="ol"><use href="#cube"/><use href="#m-tri"/></svg></button>
      <button aria-label="拔模体"><svg class="ol"><use href="#cube"/><use href="#m-tri"/></svg></button>
      <button aria-label="圆柱面"><svg class="o"><use href="#cyl"/><use href="#m-tri"/></svg></button>
      <button aria-label="保存"><svg><use href="#save"/></svg></button>
      <button aria-label="仅显示"><svg><use href="#eyebr"/></svg></button>
      <button aria-label="隐藏"><svg><use href="#eyes"/></svg></button>
      <button aria-label="反转显示"><svg><use href="#swap"/></svg></button>
    </div>
    <i class="car"></i>
  </aside>

  <section class="panel">
    <h2><svg><use href="#box"/></svg>部件导航器</h2>
    <div class="tree">
      <table>
        <thead><tr><th class="name">名称 <span>▲</span></th><th>当</th><th>最</th><th class="note">附注</th></tr></thead>
        <tbody>
          <tr><td><i class="tw">+</i><svg><use href="#mview"/></svg>模型视图</td><td></td><td></td><td></td></tr>
          <tr><td><i class="tw">+</i><svg><use href="#check"/></svg><svg class="o"><use href="#blend"/></svg>摄像机</td><td></td><td></td><td></td></tr>
          <tr><td><i class="tw">-</i><svg><use href="#green"/></svg><svg class="o"><use href="#slab"/></svg>模型历史记录</td><td></td><td><svg><use href="#check"/></svg></td><td></td></tr>
          <tr class="sub dim"><td><svg><use href="#hidden"/></svg><svg><use href="#csys"/></svg>基准坐标系 (0)</td><td></td><td><svg><use href="#check"/></svg></td><td></td></tr>
          <tr class="sub"><td><svg><use href="#eye"/></svg><svg class="vio"><use href="#blend"/></svg>体 (3)</td><td></td><td><svg><use href="#check"/></svg></td><td></td></tr>
          <tr class="sub bold"><td><svg><use href="#eye"/></svg><svg class="tan"><use href="#blend"/></svg>包容体 (4)</td><td><svg><use href="#phone"/></svg></td><td><svg><use href="#check"/></svg></td><td></td></tr>
        </tbody>
      </table>
      <div class="fill"></div>
      <div class="hscroll"></div>
    </div>
    <div class="acc"><button>搜索</button><button>相关性</button><button>细节</button><button>预览</button></div>
  </section>

  <aside class="res">
    <button aria-label="设置" class="sm"><svg><use href="#gear"/></svg></button>
    <button aria-label="装配导航器"><svg><use href="#asm"/></svg></button>
    <button aria-label="约束导航器"><svg class="o"><use href="#cube"/><use href="#m-x"/></svg></button>
    <button aria-label="部件导航器" class="on"><svg><use href="#part"/></svg></button>
    <button aria-label="重用库"><svg><use href="#part"/></svg></button>
    <button aria-label="视图工具"><svg class="tan"><use href="#blend"/><use href="#m-gear"/></svg></button>
    <button aria-label="材料" class="tall"><svg class="dark"><use href="#sphere"/></svg></button>
    <button aria-label="浏览器" class="tall"><svg><use href="#browser"/></svg></button>
    <button aria-label="历史" class="tall"><svg><use href="#clock"/></svg></button>
    <button aria-label="颜色"><svg><use href="#rainbow"/></svg></button>
    <button aria-label="加工"><svg><use href="#bluek"/></svg></button>
    <button aria-label="工具"><svg><use href="#frame"/><use href="#tools"/></svg></button>
  </aside>
</main>

<section class="bottom">
  <div class="row">
    <button aria-label="测量"><svg><use href="#pen"/></svg></button>
    <button aria-label="注释"><svg><use href="#sticky"/><use href="#m-pen"/></svg></button>
    <button aria-label="注释分析"><svg><use href="#sticky"/><use href="#m-gear"/></svg></button>
    <button aria-label="部件"><svg class="o"><use href="#blend"/><use href="#m-tri"/></svg></button>
    <button aria-label="点信息"><svg><use href="#m-plus"/><use href="#m-info"/></svg></button>
    <button aria-label="定位"><svg><use href="#axes"/><use href="#m-cube"/></svg></button>
    <button aria-label="移动坐标"><svg><use href="#axes"/><use href="#m-move"/></svg></button>
    <button aria-label="坐标系"><svg><use href="#axes"/></svg></button>
    <button aria-label="基准坐标"><svg><use href="#csys"/></svg></button>
    <button aria-label="保存坐标"><svg><use href="#axes"/><use href="#m-doc"/></svg></button>
    <button aria-label="显示坐标"><svg><use href="#axes"/><use href="#note"/></svg></button>
    <button aria-label="复制图层"><svg class="lite"><use href="#layers"/><use href="#m-doc"/></svg></button>
    <button aria-label="移动图层"><svg class="lite"><use href="#layers"/><use href="#m-x"/></svg></button>
    <button aria-label="图层设置"><svg class="lite"><use href="#layers"/><use href="#m-gear"/></svg></button>
    <button aria-label="球体"><svg class="tan"><use href="#blend"/></svg></button>
    <button aria-label="线框"><svg class="pale"><use href="#blend"/></svg></button>
    <button aria-label="区域"><svg><use href="#box"/></svg><span class="chip"></span></button>
    <button aria-label="复制面"><svg class="otl"><use href="#cube"/><use href="#m-doc"/></svg></button>
    <button aria-label="偏置"><svg class="o"><use href="#layers"/></svg></button>
    <button aria-label="加厚"><svg class="tan"><use href="#slab"/></svg></button>
    <button aria-label="延伸"><svg class="o"><use href="#sheet"/></svg></button>
    <button aria-label="片体"><svg class="o"><use href="#slab"/></svg></button>
    <button aria-label="扫掠"><svg><use href="#wing"/></svg></button>
    <button aria-label="移动面"><svg><use href="#tile"/><use href="#m-move"/></svg></button>
    <button aria-label="基准"><svg><use href="#pin"/></svg></button>
    <button aria-label="链"><svg><use href="#slab"/><use href="#m-gear"/></svg></button>
    <button aria-label="复制"><svg class="otl"><use href="#cube"/><use href="#m-doc"/></svg></button>
    <button aria-label="折弯"><svg><use href="#vee"/></svg></button>
    <button aria-label="展开"><svg class="tan"><use href="#sheet"/></svg></button>
    <button aria-label="镜像"><svg><use href="#mirror"/></svg></button>
    <button aria-label="连接"><svg><use href="#rods"/></svg></button>
  </div>
  <div class="two">
    <button aria-label="阵列"><svg class="ot"><use href="#cube"/><use href="#m-move"/></svg></button>
    <button aria-label="删除面"><svg class="o"><use href="#cube"/><use href="#m-x"/></svg></button>
    <button aria-label="有界"><svg class="teal"><use href="#dish"/></svg></button>
    <button aria-label="面一"><svg class="o"><use href="#sheet"/></svg></button>
    <button aria-label="面二"><svg class="tan"><use href="#sheet"/></svg></button>
    <button aria-label="面三"><svg class="lite"><use href="#sheet"/></svg></button>
    <button aria-label="块一"><svg><use href="#cube"/></svg></button>
    <button aria-label="块二"><svg class="o"><use href="#cube"/></svg></button>
    <button aria-label="块三"><svg class="or"><use href="#cube"/></svg></button>
    <button aria-label="块四"><svg class="ol"><use href="#cube"/></svg></button>
    <button aria-label="块五"><svg class="vio"><use href="#slab"/></svg></button>
    <button aria-label="框"><svg><use href="#box"/></svg></button>
    <button aria-label="槽"><svg><use href="#cyl"/></svg></button>
    <button aria-label="设置"><svg class="ot"><use href="#cube"/><use href="#m-gear"/></svg></button>
    <button aria-label="曲面一"><svg class="teal"><use href="#dish"/></svg></button>
    <button aria-label="曲面二"><svg class="teal"><use href="#sheet"/></svg></button>
    <button aria-label="曲面三"><svg class="tan"><use href="#sheet"/></svg></button>
    <button aria-label="曲面四"><svg><use href="#sheet"/></svg></button>
    <button aria-label="曲面五"><svg class="teal"><use href="#sheet"/></svg></button>
    <button aria-label="旋转"><svg class="vio"><use href="#blend"/></svg></button>
    <button aria-label="体一"><svg class="tan"><use href="#cube"/></svg></button>
    <button aria-label="体二"><svg class="o"><use href="#cube"/></svg></button>
    <button aria-label="体三"><svg class="o"><use href="#slab"/></svg></button>
    <button aria-label="代码"><svg class="pink"><use href="#badge"/></svg></button>
    <button aria-label="刀具"><svg><use href="#part"/></svg></button>
  </div>
  <i class="car"></i>
</section>
<footer class="status">选择对象并使用 MB3，或者双击某一对象</footer>
</body>
</html>
```
FILE: styles.css
```css
:root {
  --t: #dedfdf;
  --l: #bfc1c2;
  --r: #989b9c;
  --teal: #006f97;
  --line: #d9dcdd;
}
* { box-sizing: border-box; }
body {
  margin: 0;
  min-height: 100vh;
  display: flex;
  flex-direction: column;
  padding: 0 2px 4px;
  background: var(--teal);
  color: #444;
  font: 6px/8px "Noto Sans", "Noto Sans CJK SC", sans-serif;
}
.sprite { position: absolute; width: 0; height: 0; }
svg { width: 14px; height: 14px; flex: none; display: block; }
button {
  font: inherit; color: inherit; background: none; border: 0; padding: 0; margin: 0;
  display: flex; align-items: center; justify-content: center;
}
a { color: inherit; text-decoration: none; }
.car {
  flex: none; width: 3px; height: 2px; background: #444;
  clip-path: polygon(0 0, 100% 0, 50% 100%);
}

/* icon colour schemes */
.o { --t: #fb9a3e; --l: #ee801f; --r: #c9620f; }
.ot { --t: #f59231; }
.otl { --t: #f9a04a; --l: #e98225; }
.ol { --l: #f08a28; }
.or { --r: #f08a28; }
.tan { --t: #f3d8bc; --l: #e2bf9f; --r: #c39469; }
.blue { --t: #c6e6f0; --l: #94c5d6; --r: #6d9fb3; }
.teal { --t: #9fd0d6; --l: #55a3ad; --r: #2f7f8a; }
.vio { --t: #cf8fc4; --l: #8a68c8; --r: #6a3f9c; }
.pink { --t: #f5d3da; --l: #e2a5b5; --r: #b06b86; }
.grn { --t: #58b358; --l: #2f8d36; --r: #777; }
.pale { --t: #f0efec; --l: #dfdedb; --r: #ddcfb6; }
.lite { --t: #fff; --l: #eee; --r: #888; }
.dark { filter: brightness(.7); }
.mono { filter: grayscale(1); }
.brown { --c: #d09068; }

/* title bar */
.title { height: 20px; display: flex; align-items: center; color: #fff; }
.logo { font: bold 13px/20px "Open Sans", "Noto Sans", sans-serif; width: 28px; padding-left: 2px; }
.title svg { width: 11px; height: 11px; }
.title .car { background: #fff; margin: 0 2px; }
.quick { display: flex; align-items: center; gap: 2px; width: 272px; white-space: nowrap; }
.quick .gapl { margin-left: 4px; }
.faint { display: flex; gap: 3px; opacity: .12; margin-right: 4px; }
.win { gap: 1px; font-size: 7px; }
.title h1 { flex: 1; margin: 0; font-size: 8px; font-weight: 400; text-align: center; }
.sys { display: flex; align-items: center; gap: 5px; width: 90px; }
.sys b { flex: 1; font: bold 7px/8px "DejaVu Sans", sans-serif; }
.sys svg { width: 9px; height: 9px; }

/* menu tabs */
.menubar { height: 16px; display: flex; align-items: center; color: #fff; }
.tabs { flex: 1; display: flex; justify-content: space-between; padding: 0 9px 0 11px; font-size: 8px; line-height: 14px; }
.tabs a { border-bottom: 1px solid transparent; white-space: nowrap; }
.tabs .on { color: #e6dc8c; border-color: #e6dc8c; padding: 0 6px; margin: 0 -6px; }
.find { display: flex; align-items: center; width: 74px; height: 12px; background: #fff; padding: 0 2px; }
.find input { width: 100%; min-width: 0; border: 0; padding: 0; background: none; font: inherit; }
.find input::placeholder { color: #aaa; }
.find svg { width: 10px; height: 10px; }
.mini { width: 64px; display: flex; justify-content: space-around; font: bold 10px/12px "Open Sans", sans-serif; }
.mini svg { width: 10px; height: 10px; }

/* ribbon */
.ribbon { display: flex; height: 53px; background: #fff; border-bottom: 1px solid var(--line); }
.group { position: relative; display: flex; flex-direction: column; padding-top: 1px; border-right: 1px solid var(--line); }
.group:last-child { border: 0; }
.cols { display: grid; height: 40px; }
.g1 { width: 35px; padding-left: 5px; }
.g2 { width: 167px; }
.g2 .cols { padding-left: 4px; grid-template-columns: 23px 23px 23px 31px 38px 1fr; }
.g3 { width: 109px; }
.g3 .cols { padding-left: 4px; grid-template-columns: 39px 40px 1fr; }
.g4 { width: 122px; }
.g4 .cols { padding-left: 3px; grid-template-columns: 31px 41px 1fr; }
.g5, .g6 { width: 25px; }
.g7 { width: 228px; }
.g7 .cols { grid-template-columns: 46px 41px 22px 42px 1fr; }
.g8 { flex: 1; }
.group button { white-space: nowrap; }
.big { flex-direction: column; justify-content: flex-start; gap: 3px; }
.big svg { width: 20px; height: 20px; }
.big .car { margin-top: 1px; }
.wide { justify-content: flex-end; padding-bottom: 3px; gap: 2px; }
.glyph { font: 26px/22px "Liberation Serif", serif; color: #229fb4; }
.smalls { display: grid; grid-template-rows: repeat(3, 13px); padding-left: 3px; }
.smalls button { justify-content: flex-start; gap: 1px; }
.smalls svg { width: 11px; height: 11px; }
.mids { display: grid; grid-template-rows: 20px 20px; }
.mids button { justify-content: flex-start; gap: 3px; }
.mids svg { width: 16px; height: 16px; }
.g1 .mids button { gap: 5px; }
.group footer { height: 12px; display: flex; align-items: center; justify-content: center; color: #2a7d96; }
.group footer .car { position: absolute; right: 5px; bottom: 6px; }

/* selection bar */
.selbar { height: 19px; background: #fff; display: flex; align-items: center; border-bottom: 1px solid var(--line); }
.selbar .menu { width: 62px; gap: 4px; font-size: 7px; justify-content: flex-start; padding-left: 7px; white-space: nowrap; }
.selbar .menu svg { width: 11px; height: 11px; }
.selbar select {
  appearance: none; height: 13px; border: 1px solid #999; border-radius: 0; padding: 0 2px;
  color: #333; font: 7px/11px "Noto Sans", "Noto Sans CJK SC", sans-serif;
  background: conic-gradient(from -45deg at 50% 100%, #333 90deg, transparent 0) no-repeat right 3px center / 5px 3px #fff;
}
.s1 { width: 86px; margin-right: 5px; }
.s2 { width: 90px; margin: 0 3px 0 3px; }
.s3 { width: 28px; margin: 0 4px; }
.tools { display: flex; align-items: center; justify-content: space-between; width: 164px; }
.tools .hot { background: #c9e8f3; width: 17px; height: 17px; }
.tools button { gap: 2px; }
.narrow { width: 52px; }
.txt { width: 54px; white-space: nowrap; }
.views { width: 188px; margin-left: 3px; }
.views button { gap: 5px; }
.selbar .end { margin-left: auto; margin-right: 5px; }

/* work area */
main { flex: 1; display: flex; background: #fff; min-height: 0; }
.left { width: 29px; padding: 4px 1px 0 0; display: flex; flex-direction: column; align-items: center; }
.stack { display: flex; flex-direction: column; justify-content: space-between; align-items: center; }
.left .stack { height: 456px; padding-top: 2px; }
.pairs { display: grid; grid-template-columns: 13px 13px; row-gap: 3px; margin: 4px 0 9px; }
.pairs svg { width: 11px; height: 11px; }
.left > .car { align-self: flex-start; margin-left: 4px; }
.view { flex: 1; min-width: 0; display: flex; flex-direction: column; }
.doctabs { display: flex; padding-top: 1px; }
.doctabs a { display: flex; align-items: center; gap: 3px; height: 14px; padding: 0 3px; background: #00618c; color: #fff; font-size: 7px; }
.doctabs svg { width: 8px; height: 8px; }
.canvas {
  flex: 1; min-height: 0; margin-bottom: 1px;
  background: linear-gradient(#020202, #232323 18%, #3c3c3c 36%, #5b5b5b 56%, #727272 70%, #808080 82%, #828282);
}
.canvas svg { width: 100%; height: 100%; }
.canvas text { font-family: "Liberation Sans", sans-serif; }
.right { width: 21px; display: flex; flex-direction: column; align-items: center; justify-content: space-between; border-right: 2px solid #dcdcdc; padding: 6px 0 4px; }
.right .stack { height: 350px; border-bottom: 1px solid var(--line); padding-bottom: 5px; }
.right svg { color: #777; }

/* navigator */
.panel { width: 206px; padding: 0 3px 0 6px; display: flex; flex-direction: column; border-right: 1px solid #ddd; }
.panel h2 { margin: 0; height: 18px; display: flex; align-items: center; gap: 6px; font-size: 7px; font-weight: 400; }
.panel h2 svg { width: 8px; height: 8px; }
.tree { flex: 1; display: flex; flex-direction: column; border-bottom: 2px solid #ccc; }
table { width: 100%; border-collapse: collapse; table-layout: fixed; font-size: 7px; line-height: 10px; }
th { height: 12px; padding: 0; background: #f2f2f2; font-weight: 400; width: 14px; border-right: 1px solid #e2e2e2; }
.name { width: 114px; text-align: left; padding-left: 5px; }
.name span { font-size: 5px; padding-left: 7px; }
.note { width: auto; text-align: left; padding-left: 4px; }
td { height: 11px; padding: 0; border-right: 1px solid #eee; white-space: nowrap; overflow: hidden; }
tbody tr:nth-child(odd) td { height: 12px; }
tbody tr:nth-child(even) { background: #f7f7f7; }
td svg { width: 10px; height: 10px; display: inline-block; vertical-align: top; }
td:nth-child(n+2) svg { margin-left: 2px; }
td:first-child svg:last-of-type { margin-right: 1px; }
.tw { display: inline-block; width: 10px; padding-left: 4px; font-style: normal; }
.sub td:first-child { padding-left: 21px; background: linear-gradient(#ccc, #ccc) no-repeat 15px 0 / 1px 100%; }
.dim { color: #aaa; }
.bold { font-weight: 700; }
.fill {
  flex: 1;
  background:
    linear-gradient(90deg, transparent 113px, #eee 113px 114px, transparent 114px 127px, #eee 127px 128px, transparent 128px 141px, #eee 141px 142px, transparent 142px),
    repeating-linear-gradient(#fff 0 12px, #f7f7f7 12px 23px);
}
.hscroll { height: 12px; background: linear-gradient(#999, #999) no-repeat center 5px / 172px 1px #f2f2f2; }
.acc { padding-bottom: 3px; }
.acc button { width: 100%; height: 14px; justify-content: flex-start; gap: 6px; padding-left: 5px; border-bottom: 1px solid #ccc; font-size: 8px; color: #24718c; }
.acc button::before { content: ""; width: 3px; height: 5px; background: #345; clip-path: polygon(0 0, 100% 50%, 0 100%); }

/* resource bar */
.res { width: 19px; background: #dcdcdc; display: flex; flex-direction: column; }
.res button { height: 24px; }
.res .sm { height: 18px; margin-bottom: 6px; }
.res .sm svg { width: 9px; height: 9px; }
.res .on { background: #fff; }
.res .tall { height: 31px; }

/* bottom bar */
.bottom { height: 28px; background: #fff; display: flex; align-items: center; border-bottom: 1px solid var(--line); }
.row { display: flex; justify-content: space-between; width: 584px; padding-left: 5px; }
.row button { display: grid; }
.row button > * { grid-area: 1 / 1; place-self: center; }
.chip { width: 7px; height: 7px; background: #ee8423; }
.two { display: grid; grid-template-columns: repeat(13, 14px); row-gap: 2px; margin-left: 2px; border-right: 1px solid var(--line); }
.two svg { width: 11px; height: 11px; }
.bottom > .car { margin: 12px 4px 0 auto; }
.status { height: 12px; padding-left: 1px; background: #fff; color: #222; font-weight: 700; line-height: 11px; }
```
